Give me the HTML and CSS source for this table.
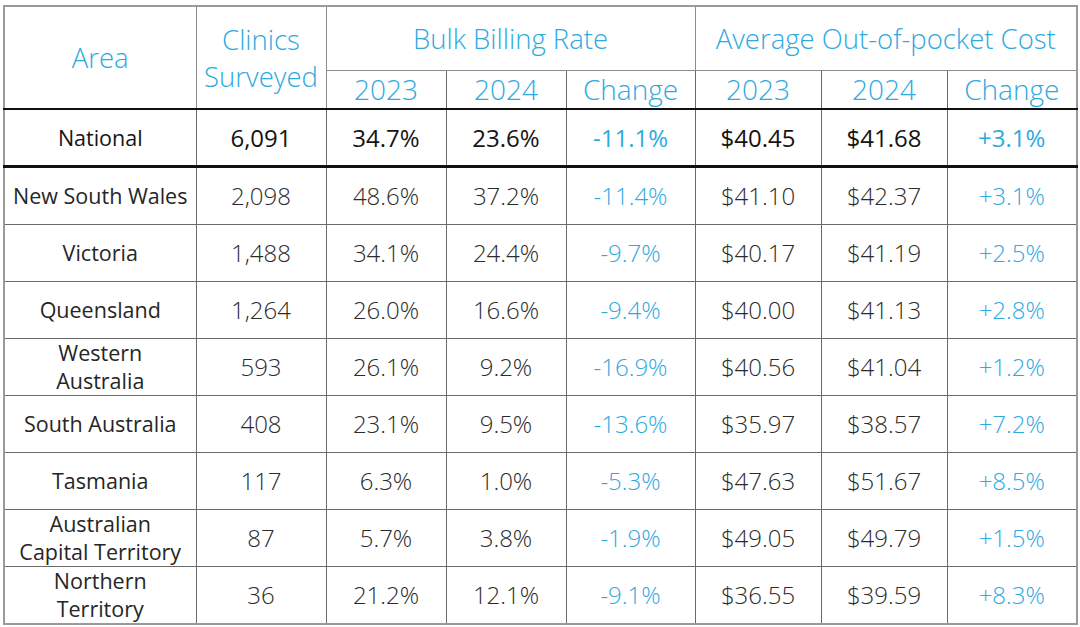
FILE: index.html
```html
<!DOCTYPE html>
<html lang="en">
<head>
<meta charset="utf-8">
<title>Bulk Billing Table</title>
<link rel="stylesheet" href="styles.css">
</head>
<body>
<div class="wrap">
<table class="bb">
  <colgroup>
    <col class="c-area"><col class="c-clin"><col class="c-b1"><col class="c-b2"><col class="c-b3"><col class="c-a1"><col class="c-a2"><col class="c-a3">
  </colgroup>
  <thead>
    <tr class="h1">
      <th rowspan="2">Area</th>
      <th rowspan="2">Clinics<br>Surveyed</th>
      <th colspan="3">Bulk Billing Rate</th>
      <th colspan="3">Average Out-of-pocket Cost</th>
    </tr>
    <tr class="h2">
      <th>2023</th><th>2024</th><th>Change</th>
      <th>2023</th><th>2024</th><th>Change</th>
    </tr>
  </thead>
  <tbody>
    <tr class="nat">
      <td class="name">National</td><td>6,091</td><td>34.7%</td><td>23.6%</td><td class="chg">-11.1%</td><td>$40.45</td><td>$41.68</td><td class="chg">+3.1%</td>
    </tr>
    <tr><td class="name">New South Wales</td><td>2,098</td><td>48.6%</td><td>37.2%</td><td class="chg">-11.4%</td><td>$41.10</td><td>$42.37</td><td class="chg">+3.1%</td></tr>
    <tr><td class="name">Victoria</td><td>1,488</td><td>34.1%</td><td>24.4%</td><td class="chg">-9.7%</td><td>$40.17</td><td>$41.19</td><td class="chg">+2.5%</td></tr>
    <tr><td class="name">Queensland</td><td>1,264</td><td>26.0%</td><td>16.6%</td><td class="chg">-9.4%</td><td>$40.00</td><td>$41.13</td><td class="chg">+2.8%</td></tr>
    <tr><td class="name">Western<br>Australia</td><td>593</td><td>26.1%</td><td>9.2%</td><td class="chg">-16.9%</td><td>$40.56</td><td>$41.04</td><td class="chg">+1.2%</td></tr>
    <tr><td class="name">South Australia</td><td>408</td><td>23.1%</td><td>9.5%</td><td class="chg">-13.6%</td><td>$35.97</td><td>$38.57</td><td class="chg">+7.2%</td></tr>
    <tr><td class="name">Tasmania</td><td>117</td><td>6.3%</td><td>1.0%</td><td class="chg">-5.3%</td><td>$47.63</td><td>$51.67</td><td class="chg">+8.5%</td></tr>
    <tr><td class="name">Australian<br>Capital Territory</td><td>87</td><td>5.7%</td><td>3.8%</td><td class="chg">-1.9%</td><td>$49.05</td><td>$49.79</td><td class="chg">+1.5%</td></tr>
    <tr><td class="name">Northern<br>Territory</td><td>36</td><td>21.2%</td><td>12.1%</td><td class="chg">-9.1%</td><td>$36.55</td><td>$39.59</td><td class="chg">+8.3%</td></tr>
  </tbody>
</table>
</div>
</body>
</html>
```

FILE: styles.css
```css
html, body {
  margin: 0;
  padding: 0;
  background: #ffffff;
}

.wrap {
  padding: 5px 0 0 3px;
}

.bb {
  border-collapse: collapse;
  table-layout: fixed;
  width: 1073px;
  font-family: "Open Sans", "Liberation Sans", sans-serif;
  border: 2px solid #9a9a9a;
}

.c-area { width: 192px; }
.c-clin { width: 130px; }
.c-b1 { width: 120px; }
.c-b2 { width: 120px; }
.c-b3 { width: 129px; }
.c-a1 { width: 126px; }
.c-a2 { width: 126px; }
.c-a3 { width: 130px; }

.bb th,
.bb td {
  border: 1.5px solid #6a6a6a;
  text-align: center;
  vertical-align: middle;
  padding: 0;
}

.bb th {
  font-weight: 300;
  font-size: 27.5px;
  color: #2ea9e1;
  line-height: 37px;
}

.h1 th { border-color: #8c8c8c; height: 63px; }
.h1 th[rowspan] { border-bottom: 2px solid #111; }

.h2 th {
  height: 37px;
  font-size: 28px;
  border-bottom: 2px solid #111;
  border-top-color: #8c8c8c;
}

.bb td {
  font-size: 24px;
  font-weight: 300;
  color: #2b2b2b;
  line-height: 28px;
  height: 56px;
}

.bb td.name {
  font-size: 21.5px;
  font-weight: 400;
  color: #262626;
}

.bb .chg { color: #2ea9e1; }

.nat td {
  font-weight: 400;
  color: #141414;
  height: 55px;
  border-bottom: 3px solid #111;
}

.nat td.name { color: #141414; }

.nat td.chg {
  font-weight: 400;
  color: #2ea9e1;
}
```
